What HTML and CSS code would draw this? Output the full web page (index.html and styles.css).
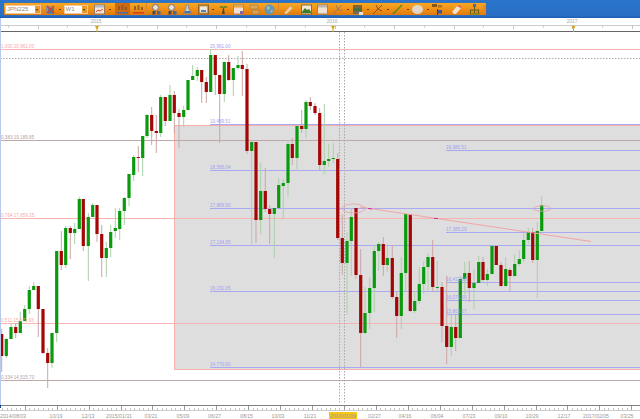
FILE: index.html
```html
<!DOCTYPE html>
<html lang="en">
<head>
    <meta charset="UTF-8">
    <title>JPN225 W1</title>
    <link rel="stylesheet" href="styles.css">
</head>
<body>
    <svg class="defs" width="0" height="0">
        <symbol id="i-candles" viewBox="0 0 11 11"><rect x="1" y="2" width="8" height="7" fill="#8a8f98"/><rect x="3" y="4" width="6" height="6" fill="#3a7fc0"/><path d="M2 2l7 7M9 2l-7 7" stroke="#d8302a" stroke-width="1.4"/></symbol>
        <symbol id="i-window" viewBox="0 0 11 11"><rect x="0.5" y="1" width="10" height="9" fill="#f4f4f8" stroke="#8a7a70"/><rect x="1" y="1.5" width="9" height="2" fill="#a5c0e8"/><path d="M2 8l2-2 2 1 3-2" stroke="#d83a30" fill="none"/></symbol>
        <symbol id="i-bars-blue" viewBox="0 0 11 11"><path d="M1 2h2v4H1zM4.5 1h2v5h-2zM8 3h2v3H8z" fill="#8a5a28"/><rect x="0" y="8" width="11" height="1.5" fill="#2f6fd0"/></symbol>
        <symbol id="i-bars-red" viewBox="0 0 11 11"><path d="M1 2h2v4H1zM4.5 1h2v5h-2zM8 3h2v3H8z" fill="#8a5a28"/><rect x="0" y="8" width="11" height="1.5" fill="#d83028"/></symbol>
        <symbol id="i-zoom" viewBox="0 0 11 11"><circle cx="4.5" cy="3.5" r="3" fill="#e8eef8" stroke="#5a6a80"/><rect x="1.5" y="7" width="3" height="3.5" fill="#30405a"/><rect x="6" y="7" width="3.5" height="3.5" fill="#2f5fb0"/></symbol>
        <symbol id="i-flask" viewBox="0 0 11 11"><path d="M4 1h2.5v3l3 5.5H1.5L4 4z" fill="#c8d8ee" stroke="#6a7a90" stroke-width=".7"/><path d="M3 7h5l1 2H2z" fill="#2f6fc0"/></symbol>
        <symbol id="i-frame" viewBox="0 0 11 11"><rect x="0.5" y="1" width="10" height="9" fill="#c89a50" stroke="#7a5a30"/><rect x="2" y="2.5" width="7" height="6" fill="#f2f6fa"/><rect x="3" y="6" width="5" height="2" fill="#3a80c8"/></symbol>
        <symbol id="i-palm" viewBox="0 0 11 11"><path d="M5 4l1 0 .8 6H4z" fill="#4a3a20"/><path d="M1 4c1-2 3-3 4.5-1C7 1 9 2 10 4 8 3 7 4 5.5 4 4 4 3 3 1 4z" fill="#3a7a20"/></symbol>
        <symbol id="i-panel" viewBox="0 0 11 11"><rect x="0.5" y="1" width="10" height="9" fill="#f2eef0" stroke="#a08a70"/><rect x="1" y="1.5" width="9" height="2" fill="#e8a040"/><rect x="7" y="7" width="3.5" height="3" fill="#8060c0"/></symbol>
        <symbol id="i-boxes" viewBox="0 0 11 11"><rect x="1" y="1" width="8" height="4" fill="#d8a860" stroke="#a87a40" stroke-width=".7"/><rect x="3" y="6" width="7" height="4" fill="#d8a860" stroke="#a87a40" stroke-width=".7"/></symbol>
        <symbol id="i-globe" viewBox="0 0 11 11"><circle cx="5.5" cy="5.5" r="5" fill="#4a9ad8"/><path d="M3 2l3 1-1 3-2-1zM6 7l3-1-1 3z" fill="#a8c8b0"/></symbol>
        <symbol id="i-pencil" viewBox="0 0 11 11"><path d="M2 10l-1-1 6-7 3 2-6 6z" fill="#f4dcb0" stroke="#b89060" stroke-width=".6"/></symbol>
        <symbol id="i-picture" viewBox="0 0 11 11"><rect x="0.5" y="1" width="10" height="9" fill="#f2f4f0" stroke="#6a6a50"/><path d="M1 8l3-4 2 2 2-1 2 3v1H1z" fill="#1f7a30"/></symbol>
        <symbol id="i-sheet" viewBox="0 0 11 11"><rect x="0.5" y="1" width="10" height="9" fill="#eef0f4" stroke="#8a8478"/><rect x="1" y="1.5" width="9" height="2" fill="#b0b8c8"/></symbol>
        <symbol id="i-fork" viewBox="0 0 11 11"><path d="M1 10L6 5M6 5L10 1M6 5L4 1M6 5L10 7" stroke="#7a7a88" stroke-width="1" fill="none"/></symbol>
        <symbol id="i-fork-b" viewBox="0 0 11 11"><path d="M1 10L6 5M6 5L10 1M6 5L4 1M6 5L10 7" stroke="#7a4a20" stroke-width="1" fill="none"/></symbol>
        <symbol id="i-stack" viewBox="0 0 11 11"><rect x="1" y="1" width="9" height="3" fill="#705a38"/><rect x="1" y="4" width="9" height="3" fill="#2f6a40"/><rect x="1" y="7" width="9" height="3" fill="#5a6a70"/><rect x="7" y="8" width="4" height="3" fill="#f0f0f0"/></symbol>
        <symbol id="i-line" viewBox="0 0 11 11"><path d="M1 10L10 1" stroke="#4f8a20" stroke-width="1.7"/></symbol>
        <symbol id="i-ellipse" viewBox="0 0 11 11"><ellipse cx="5.5" cy="5.5" rx="5.5" ry="4.5" fill="#dfe2e6"/></symbol>
        <symbol id="i-flags" viewBox="0 0 11 11"><rect x="0" y="0" width="5" height="3" fill="#7a4a18"/><rect x="6" y="1" width="4" height="2.5" fill="#a06a28"/><rect x="5" y="5" width="1" height="6" fill="#333"/><rect x="6" y="6" width="4" height="3.5" fill="#1f4fc0"/></symbol>
        <symbol id="i-eraser" viewBox="0 0 11 11"><path d="M1 8l5-6 4 2-5 6H3z" fill="#f6f2f0"/><path d="M6 2l3-1 1.5 2-.5 1z" fill="#e85a70"/></symbol>
        <symbol id="i-tree" viewBox="0 0 11 11"><rect x="4" y="0" width="3" height="3" fill="#2f5fb0"/><path d="M5.5 3v3M1 6h9M1.5 6v3M5.5 6v3M9.5 6v3" stroke="#4a5a20" fill="none"/><rect x="0" y="9" width="11" height="1.5" fill="#6a8a20"/></symbol>
    </svg>

    <header class="topbar">
        <div class="toolbar">
            <div class="combo combo-symbol"><span class="combo-text">JPN225</span><span class="combo-btn"></span></div>
            <button class="tool after-combo"><svg><use href="#i-candles"/></svg></button>
            <span class="arrow"></span>
            <div class="combo combo-frame"><span class="combo-text">W1</span><span class="combo-btn"></span></div>
            <button class="tool gap-m"><svg><use href="#i-window"/></svg></button>
            <span class="arrow"></span>
            <button class="tool active gap-s"><svg><use href="#i-bars-blue"/></svg></button>
            <button class="tool"><svg><use href="#i-bars-red"/></svg></button>
            <span class="sep"></span>
            <button class="tool"><svg><use href="#i-zoom"/></svg></button>
            <button class="tool"><svg><use href="#i-zoom"/></svg></button>
            <button class="tool"><svg><use href="#i-flask"/></svg></button>
            <button class="tool"><svg><use href="#i-frame"/></svg></button>
            <span class="arrow"></span>
            <button class="tool"><svg><use href="#i-palm"/></svg></button>
            <button class="tool"><svg><use href="#i-panel"/></svg></button>
            <button class="tool"><svg><use href="#i-boxes"/></svg></button>
            <button class="tool"><svg><use href="#i-globe"/></svg></button>
            <span class="sep"></span>
            <button class="tool"><svg><use href="#i-pencil"/></svg></button>
            <button class="tool gap-s"><svg><use href="#i-picture"/></svg></button>
            <button class="tool"><svg><use href="#i-sheet"/></svg></button>
            <button class="tool"><svg><use href="#i-fork"/></svg></button>
            <span class="arrow"></span>
            <button class="tool"><svg><use href="#i-stack"/></svg></button>
            <span class="arrow"></span>
            <button class="tool"><svg><use href="#i-fork-b"/></svg></button>
            <span class="arrow"></span>
            <button class="tool"><svg><use href="#i-line"/></svg></button>
            <span class="arrow"></span>
            <button class="tool"><svg><use href="#i-ellipse"/></svg></button>
            <span class="arrow"></span>
            <button class="tool"><svg><use href="#i-flags"/></svg></button>
            <button class="tool gap-s"><svg><use href="#i-eraser"/></svg></button>
            <button class="tool gap-s"><svg><use href="#i-tree"/></svg></button>
            <span class="grip"></span>
        </div>
    </header>

    <svg class="chart" id="chart" viewBox="0 18 640 401">
        <!-- fib box -->
        <rect class="fib-box" x="174.5" y="125.5" width="470" height="244"/>

        <!-- full width levels -->
        <line class="lv-pink" x1="0" x2="640" y1="49.5" y2="49.5"/>
        <line class="lv-dots" x1="0" x2="640" y1="58.5" y2="58.5"/>
        <line class="lv-brown" x1="0" x2="640" y1="140.5" y2="140.5"/>
        <line class="lv-pink" x1="0" x2="640" y1="218.5" y2="218.5"/>
        <line class="lv-pink" x1="0" x2="640" y1="323.5" y2="323.5"/>
        <line class="lv-brown" x1="0" x2="640" y1="380.5" y2="380.5"/>

        <!-- projection levels -->
        <line class="lv-blue" x1="210" x2="640" y1="124.5" y2="124.5"/>
        <line class="lv-blue" x1="446" x2="640" y1="150.5" y2="150.5"/>
        <line class="lv-blue" x1="210" x2="640" y1="170.5" y2="170.5"/>
        <line class="lv-blue" x1="210" x2="640" y1="208.5" y2="208.5"/>
        <line class="lv-blue" x1="446" x2="640" y1="232.5" y2="232.5"/>
        <line class="lv-blue" x1="210" x2="640" y1="245.5" y2="245.5"/>
        <line class="lv-blue" x1="446" x2="640" y1="282.5" y2="282.5"/>
        <line class="lv-blue" x1="210" x2="640" y1="291.5" y2="291.5"/>
        <line class="lv-blue" x1="446" x2="640" y1="300.5" y2="300.5"/>
        <line class="lv-blue" x1="446" x2="640" y1="314.5" y2="314.5"/>
        <line class="lv-blue" x1="210" x2="640" y1="367.5" y2="367.5"/>

        <!-- crosshair -->
        <line class="lv-dots" x1="339.5" x2="339.5" y1="32" y2="404"/>
        <line class="lv-dots" x1="344.5" x2="344.5" y1="32" y2="404"/>

        <g id="candles"></g>

        <!-- trend line and ellipses -->
        <line class="trend" x1="360" y1="207" x2="591" y2="241.5"/>
        <line class="trend-mark" x1="368" y1="208.5" x2="372" y2="208.9"/>
        <line class="trend-mark" x1="434" y1="218.5" x2="438" y2="218.5"/>
        <ellipse class="oval" cx="353.5" cy="208.5" rx="11.5" ry="4.5"/>
        <ellipse class="oval" cx="542" cy="208.5" rx="9" ry="2.7"/>

        <!-- level labels -->
        <text class="lb-pink" x="1" y="47.5">1.000 20,961.00</text>
        <text class="lb-brown" x="1" y="138.5">0.383 19,189.85</text>
        <text class="lb-pink" x="1" y="216.5">0.764 17,659.35</text>
        <text class="lb-pink" x="1" y="322">0.511 15,672.93</text>
        <text class="lb-brown" x="1" y="379">0.334 14,515.70</text>
        <text class="lb-blue" x="210" y="47.5">20,961.00</text>
        <text class="lb-blue" x="210" y="122.5">19,489.51</text>
        <text class="lb-blue" x="446" y="148.5">18,985.51</text>
        <text class="lb-blue" x="210" y="168.5">18,595.04</text>
        <text class="lb-blue" x="210" y="206.5">17,889.50</text>
        <text class="lb-blue" x="446" y="230.5">17,385.29</text>
        <text class="lb-blue" x="210" y="244">17,134.35</text>
        <text class="lb-blue" x="446" y="281">16,412.56</text>
        <text class="lb-blue" x="210" y="290">16,231.05</text>
        <text class="lb-blue" x="446" y="298.5">16,071.29</text>
        <text class="lb-blue" x="446" y="312.5">15,805.27</text>
        <text class="lb-blue" x="210" y="366">14,770.00</text>

        <!-- top time strip -->
        <rect class="strip" x="0" y="18" width="640" height="13"/>
        <line class="strip-line" x1="0" x2="640" y1="25.5" y2="25.5"/>
        <line class="strip-dark" x1="1" x2="640" y1="31.5" y2="31.5"/>
        <g id="strip-ticks"></g>
        <text class="lb-year" x="96" y="23">2015</text>
        <text class="lb-year" x="332" y="23">2016</text>
        <text class="lb-year" x="572" y="23">2017</text>
        <path class="marker" d="M95 26h4l-1.5 3v3h-1v-3z"/>
        <path class="marker" d="M331 26h4l-1.5 3v3h-1v-3z"/>
        <path class="marker" d="M571.5 26h4l-1.5 3v3h-1v-3z"/>

        <!-- bottom axis -->
        <rect class="strip" x="0" y="406" width="640" height="13"/>
        <line class="axis-dark" x1="0" x2="640" y1="405.5" y2="405.5"/>
        <line class="strip-line" x1="0" x2="640" y1="410.5" y2="410.5"/>
        <g id="axis-ticks"></g>
        <rect class="axis-now" x="329" y="412" width="28" height="7"/>
        <text class="lb-date" x="13" y="417.5">2014/08/03</text>
        <text class="lb-date" x="56" y="417.5">10/19</text>
        <text class="lb-date" x="88" y="417.5">12/13</text>
        <text class="lb-date" x="119" y="417.5">2015/01/31</text>
        <text class="lb-date" x="151" y="417.5">03/21</text>
        <text class="lb-date" x="183" y="417.5">05/09</text>
        <text class="lb-date" x="214.5" y="417.5">06/27</text>
        <text class="lb-date" x="246.5" y="417.5">08/15</text>
        <text class="lb-date" x="278" y="417.5">10/03</text>
        <text class="lb-date" x="310" y="417.5">11/21</text>
        <text class="lb-date" x="343" y="417.5">2016/01/09</text>
        <text class="lb-date" x="374.5" y="417.5">02/27</text>
        <text class="lb-date" x="405" y="417.5">04/16</text>
        <text class="lb-date" x="437" y="417.5">06/04</text>
        <text class="lb-date" x="469" y="417.5">07/23</text>
        <text class="lb-date" x="501" y="417.5">09/10</text>
        <text class="lb-date" x="532" y="417.5">10/29</text>
        <text class="lb-date" x="564" y="417.5">12/17</text>
        <text class="lb-date" x="596" y="417.5">2017/02/05</text>
        <text class="lb-date" x="627" y="417.5">03/25</text>

        <!-- left edge -->
        <rect class="edge" x="0" y="18" width="1" height="388"/>
        <rect class="edge-end" x="0" y="405" width="1" height="3"/>
    </svg>

    <script src="chart.js"></script>
</body>
</html>
```

FILE: styles.css
```css
body { margin: 0; background: white; width: 640px; height: 419px; overflow: hidden; font-family: "Liberation Sans", Arial, sans-serif; }
.defs { position: absolute; }

.topbar { height: 18px; box-sizing: border-box; padding: 3px 0 0 4px; background: linear-gradient(#2a74cc, #2a6fc6 85%, #1b5cad); }
.toolbar { width: 482px; height: 12px; box-sizing: border-box; padding-left: 1px; display: flex; align-items: center; background: linear-gradient(#f7a825, #ef8f16 55%, #df7a0e); border-radius: 1px; box-shadow: 0 0 1px #c9701a; }

.combo { height: 9px; box-sizing: border-box; display: flex; background: white; border: 1px solid #f2c79a; flex: none; }
.combo-symbol { width: 36px; }
.combo-frame { width: 24px; margin-left: 1px; }
.combo-text { flex: 1; padding-left: 1px; font-size: 6px; line-height: 7px; color: #888; }
.combo-btn { width: 5px; background: #e99a28; position: relative; }
.combo-btn::after { content: ""; position: absolute; left: 1px; top: 3px; border: 1.5px solid transparent; border-top: 2px solid #333; border-bottom: 0; }

.tool { width: 15.5px; height: 12px; padding: 0; border: 0; background: none; display: flex; align-items: center; justify-content: center; flex: none; }
.tool svg { width: 11px; height: 11px; display: block; opacity: .85; }
.tool.active { background: #cf6a10; }
.after-combo { margin-left: 1.5px; }
.gap-s { margin-left: 3px; }
.gap-m { margin-left: 4.25px; }
.arrow { width: 4.5px; flex: none; display: flex; align-items: center; justify-content: center; }
.arrow::after { content: ""; width: 2px; height: 1px; background: #6a4010; }
.sep { width: 2.5px; height: 12px; flex: none; box-sizing: border-box; border-left: 1px solid #d88a2a; margin-left: 0.5px; }
.grip { width: 4px; height: 8px; margin-left: 1px; background: #d98a30; opacity: .7; }

.chart { display: block; width: 640px; height: 401px; }

.fib-box { fill: #dedede; stroke: #f7b0ac; }
.lv-pink { stroke: #f7b4b0; }
.lv-brown { stroke: #c2a9a9; }
.lv-blue { stroke: #a9a9f2; }
.lv-dots { stroke: #aaa; stroke-dasharray: 1.5 1.5; }
.trend { stroke: #f2a5a5; }
.trend-mark { stroke: #e0209a; }
.oval { fill: none; stroke: #eaa0ac; stroke-width: .8; }

.wick-up { stroke: #a9d0a9; }
.wick-down { stroke: #cba6a6; }
.body-up { fill: #0a9a0e; }
.body-down { fill: #a40606; }

text { font-family: "Liberation Sans", Arial, sans-serif; }
.lb-pink { font-size: 4.6px; fill: #f4aaaa; }
.lb-brown { font-size: 4.6px; fill: #b8a0a0; }
.lb-blue { font-size: 4.6px; fill: #a0a0f2; }
.lb-year { font-size: 5px; fill: #aaa; text-anchor: middle; }
.lb-date { font-size: 5.2px; fill: #999; text-anchor: middle; }

.strip { fill: white; }
.strip-line { stroke: #ccc; }
.strip-dark { stroke: #666; }
.axis-dark { stroke: #808080; }
.tick { stroke: #999; }
.tick-minor { stroke: #c4c4c4; }
.marker { fill: #d9a414; }
.axis-now { fill: #f5c518; }
.edge { fill: #b9c9ec; }
.edge-end { fill: #16408a; }
```

FILE: chart.js
```js
// x, body top, body bottom, wick top, wick bottom, u/d
var candles = [
  [1.7,334,356,329,372,'d'],[6.3,339,356,338,358,'u'],[11,327,339,323,339,'u'],[15.7,327,333,323,338,'d'],
  [20.3,321,333,312,333,'u'],[24.7,309,321,305,321,'u'],[29.3,290,309,286,314,'u'],[33.7,286,290,282,290,'u'],
  [38.3,286,309,286,337,'d'],[43,309,353,309,354,'d'],[47.7,353,363,348,388,'d'],[52,333,363,333,368,'u'],
  [56.7,251,333,251,342,'u'],[61.3,251,265,231,270,'d'],[65.7,228,265,226,268,'u'],[70.3,228,233,226,259,'d'],
  [74.7,229,233,223,244,'u'],[79.3,199,229,197,229,'u'],[83.3,199,246,199,251,'d'],[88.3,217,246,213,281,'u'],
  [92.7,205,217,203,217,'u'],[97,205,234,205,242,'d'],[101.7,234,258,225,277,'d'],[106.3,248,258,242,277,'u'],
  [110.7,232,248,225,257,'u'],[115.3,228,231,208,238,'u'],[119.7,211,229,208,240,'u'],[124.3,198,211,197,225,'u'],
  [129,174,198,174,206,'u'],[133.7,157,175,155,181,'u'],[138.3,157,158,146,172,'d'],[142.7,136,158,136,176,'u'],
  [147,115,136,114,138,'u'],[151.7,115,131,107,145,'d'],[156.3,131,133,115,153,'d'],[160.7,97,133,95,137,'u'],
  [165.3,97,121,97,126,'d'],[170,95,121,85,121,'u'],[174.3,95,113,91,133,'d'],[179,113,117,109,148,'d'],
  [183.7,110,117,106,127,'u'],[188,80,110,80,110,'u'],[192.7,76,80,65,80,'u'],[197.3,70,76,67,81,'u'],
  [201.7,70,82,70,103,'d'],[206.3,82,92,77,103,'d'],[210.7,55,92,49,92,'u'],[215.3,55,75,55,95,'d'],
  [219.7,75,94,75,143,'d'],[224.3,62,94,62,102,'u'],[228.7,62,80,55,81,'d'],[233.3,68,80,68,96,'u'],
  [238,65,68,56,70,'u'],[242.3,65,69,51,96,'d'],[247,69,151,64,154,'d'],[251.7,142,151,140,244,'u'],
  [256,142,220,142,243,'d'],[260.7,191,220,163,234,'u'],[265.3,191,209,168,212,'d'],[269.7,209,214,205,244,'d'],
  [274.3,208,214,208,258,'u'],[278.7,185,208,178,208,'u'],[283.3,183,186,179,219,'u'],[288,144,183,140,197,'u'],
  [292.3,144,158,138,165,'d'],[297,126,158,126,169,'u'],[301.7,126,129,110,133,'d'],[306,102,129,100,138,'u'],
  [310.3,102,106,97,110,'d'],[315,106,113,103,115,'d'],[319.7,113,165,108,170,'d'],[324.3,161,165,104,174,'u'],
  [328.7,159,161,144,167,'u'],[333.3,158,159,143,163,'u'],[337.7,159,238,153,240,'d'],[342.3,238,263,214,275,'d'],
  [347,241,263,232,315,'u'],[351.3,217,241,208,276,'u'],[356,208,275,208,279,'d'],[360.7,275,333,249,367,'d'],
  [365,313,333,287,334,'u'],[369.7,288,313,277,329,'u'],[374.3,251,288,245,312,'u'],[378.7,244,251,242,271,'u'],
  [383.3,244,265,237,276,'d'],[387.3,258,265,246,272,'u'],[392.3,258,297,245,299,'d'],[396.7,297,316,292,338,'d'],
  [401.3,273,316,257,329,'u'],[405.7,214,273,213,291,'u'],[410.3,214,311,214,312,'d'],[414.7,301,311,291,313,'u'],
  [419.3,284,301,267,304,'u'],[423.7,267,284,261,294,'u'],[428,257,267,253,290,'u'],[432.7,257,287,240,291,'d'],
  [437.3,287,288,261,291,'u'],[442,287,326,282,342,'d'],[446.7,326,347,276,364,'d'],[451.3,327,347,315,356,'u'],
  [455.7,327,338,315,351,'d'],[460.3,279,338,276,338,'u'],[464.7,273,279,262,294,'u'],[469.3,273,288,261,302,'d'],
  [474,283,288,269,309,'u'],[478.7,262,283,256,283,'u'],[483,262,280,257,281,'d'],[487.3,274,280,269,286,'u'],
  [492,246,274,246,274,'u'],[496.3,246,265,246,265,'d'],[501,265,286,262,287,'d'],[505.7,269,286,257,287,'u'],
  [510,270,276,268,291,'d'],[514.7,264,276,254,277,'u'],[519.3,259,264,250,266,'u'],[523.7,240,259,233,262,'u'],
  [528.3,232,240,228,244,'u'],[532.7,232,260,228,263,'d'],[537.3,231,260,222,298,'u'],[541.7,205,231,196,231,'u']
];

var NS = 'http://www.w3.org/2000/svg';

function add(parent, tag, attrs) {
  var el = document.createElementNS(NS, tag);
  for (var k in attrs) el.setAttribute(k, attrs[k]);
  parent.appendChild(el);
  return el;
}

var group = document.getElementById('candles');
candles.forEach(function (c) {
  var kind = c[5] === 'u' ? 'up' : 'down';
  add(group, 'line', { x1: c[0], x2: c[0], y1: c[3], y2: c[4], 'class': 'wick-' + kind });
  add(group, 'rect', { x: c[0] - 1.6, y: c[1], width: 3.2, height: Math.max(c[2] - c[1], 1), 'class': 'body-' + kind });
});

// top strip, a tick every 30px, every second one taller
var strip = document.getElementById('strip-ticks');
for (var i = 0; i < 22; i++) {
  var sx = Math.round(8 + i * 29.7) + 0.5;
  add(strip, 'line', { x1: sx, x2: sx, y1: 26, y2: i % 2 ? 29 : 27.5, 'class': 'tick-minor' });
}

// bottom axis, 7 minor ticks for each major one
var axis = document.getElementById('axis-ticks');
for (var j = 0; j < 141; j++) {
  var ax = Math.round(24.8 + (j - 7) * 4.56) + 0.5;
  var major = j % 7 === 0;
  add(axis, 'line', { x1: ax, x2: ax, y1: major ? 406 : 408, y2: 410, 'class': major ? 'tick' : 'tick-minor' });
}
```
